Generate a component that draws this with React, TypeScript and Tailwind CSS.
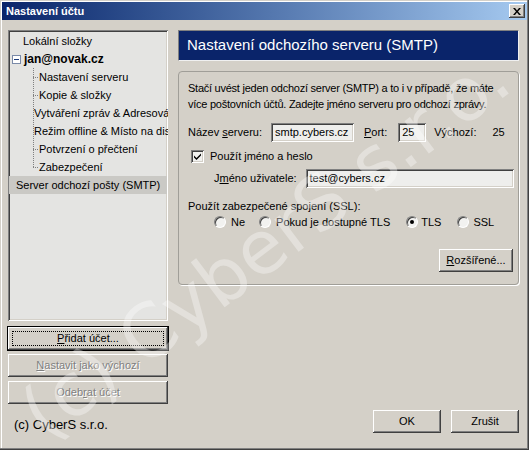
import type { ReactNode } from 'react';

const raised =
  'bg-[#d4d0c8] shadow-[inset_-1px_-1px_0_#404040,inset_1px_1px_0_#ffffff,inset_-2px_-2px_0_#808080,inset_2px_2px_0_#d4d0c8]';
const sunken =
  'shadow-[inset_1px_1px_0_#808080,inset_-1px_-1px_0_#ffffff,inset_2px_2px_0_#404040,inset_-2px_-2px_0_#d4d0c8]';

function Button({
  children,
  className = '',
  disabled = false,
  focused = false,
}: {
  children: ReactNode;
  className?: string;
  disabled?: boolean;
  focused?: boolean;
}) {
  return (
    <div
      className={`h-[23px] flex items-center justify-center ${raised} ${
        focused ? 'outline outline-1 outline-black' : ''
      } ${disabled ? 'text-[#808080] [text-shadow:1px_1px_0_#ffffff]' : 'text-black'} ${className}`}
    >
      {focused ? (
        <div className="absolute inset-[4px] border border-dotted border-black" />
      ) : null}
      <span className="relative">{children}</span>
    </div>
  );
}

function Radio({ checked = false }: { checked?: boolean }) {
  return (
    <span className="w-[12px] h-[12px] rounded-full bg-[#f2f2f0] border border-[#808080] border-b-white border-r-white shadow-[inset_1px_1px_0_#404040] flex items-center justify-center">
      {checked && <span className="w-[4px] h-[4px] rounded-full bg-black" />}
    </span>
  );
}

function Field({ value, className = '' }: { value: string; className?: string }) {
  return (
    <div className={`h-[19px] bg-[#eeeeec] ${sunken} flex items-center pl-[4px] ${className}`}>
      {value}
    </div>
  );
}

const children = [
  'Nastavení serveru',
  'Kopie & složky',
  'Vytváření zpráv & Adresování',
  'Režim offline & Místo na disku',
  'Potvrzení o přečtení',
  'Zabezpečení',
];

function AccountTree() {
  return (
    <div className={`h-[291px] bg-[#e4e4e2] ${sunken} p-[2px] pt-[2px] overflow-hidden`}>
      <div className="h-[18px] flex items-center pl-[13px] whitespace-nowrap">Lokální složky</div>
      <div className="h-[18px] flex items-center pl-[2px] whitespace-nowrap">
        <span className="w-[9px] h-[9px] border border-[#7a8aa8] bg-white flex items-center justify-center mr-[3px]">
          <span className="w-[5px] h-[1px] bg-[#1b3a7a]" />
        </span>
        <span className="font-bold text-[12px]">jan@novak.cz</span>
      </div>
      <div className="relative">
        {/* dotted connector running down the child list */}
        <div className="absolute left-[23px] top-0 h-[99px] border-l border-dotted border-[#808080]" />
        {children.map((c) => (
          <div key={c} className="h-[18px] flex items-center whitespace-nowrap">
            <span className="ml-[23px] w-[5px] border-t border-dotted border-[#808080]" />
            <span className="ml-[1px]">{c}</span>
          </div>
        ))}
      </div>
      <div className="h-[18px] -mx-[1px] flex items-center pl-[7px] bg-[#cac9c5] whitespace-nowrap">
        Server odchozí pošty (SMTP)
      </div>
    </div>
  );
}

export default function App() {
  return (
    <div className="relative w-[529px] h-[450px] overflow-hidden bg-[#d4d0c8] text-[11px] text-black font-['Liberation_Sans','Arial',sans-serif] shadow-[inset_-1px_-1px_0_#404040,inset_-2px_-2px_0_#808080,inset_1px_1px_0_#d4d0c8,inset_2px_2px_0_#ffffff] flex flex-col p-[2px]">
      {/* title bar */}
      <div className="h-[18px] shrink-0 bg-gradient-to-r from-[#0a246a] to-[#a6caf0] flex items-center pl-[4px] pr-[2px]">
        <span className="text-white font-bold text-[11px]">Nastavení účtu</span>
        <div className={`ml-auto w-[16px] h-[14px] ${raised} flex items-center justify-center`}>
          <svg width="8" height="7" viewBox="0 0 8 7">
            <path d="M0 0h2l2 2.5L6 0h2L5 3.5 8 7H6L4 4.5 2 7H0l3-3.5z" fill="#000" />
          </svg>
        </div>
      </div>

      <div className="flex-1 flex gap-[10px] pl-[6px] pr-[8px] pt-[10px] pb-[15px]">
        {/* accounts column */}
        <div className="w-[160px] flex flex-col">
          <AccountTree />
          <div className="mt-[6px] flex flex-col gap-[4px]">
            <Button focused className="relative">
              <span className="underline">P</span>řidat účet...
            </Button>
            <Button disabled>
              <span className="underline">N</span>astavit jako výchozí
            </Button>
            <Button disabled>
              Odeb<span className="underline">r</span>at účet
            </Button>
          </div>
          <div className="mt-auto pl-[6px] text-[13px] leading-[16px]">(c) CyberS s.r.o.</div>
        </div>

        {/* settings pane */}
        <div className="flex-1 flex flex-col">
          <div className="h-[31px] bg-[#0a246a] border border-[#808080] border-b-[#f0f0f0] border-r-[#f0f0f0] flex items-center pl-[8px] text-white text-[15px]">
            Nastavení odchozího serveru (SMTP)
          </div>

          <div className="mt-[10px] h-[214px] rounded-[4px] border border-[#a09e98] shadow-[1px_1px_0_#ffffff] px-[9px] pt-[8px]">
            <p className="leading-[16px] whitespace-nowrap tracking-[-0.25px]">
              Stačí uvést jeden odchozí server (SMTP) a to i v případě, že máte
              <br />
              více poštovních účtů. Zadejte jméno serveru pro odchozí zprávy.
            </p>

            <div className="mt-[11px] flex items-center">
              <span>
                Název <span className="underline">s</span>erveru:
              </span>
              <Field value="smtp.cybers.cz" className="ml-[9px] w-[83px]" />
              <span className="ml-[10px]">
                <span className="underline">P</span>ort:
              </span>
              <Field value="25" className="ml-[11px] w-[28px]" />
              <span className="ml-[8px]">Výchozí:</span>
              <span className="ml-[16px]">25</span>
            </div>

            <div className="mt-[6px] ml-[3px] flex items-center">
              <span className={`w-[13px] h-[13px] bg-[#f2f2f0] ${sunken} flex items-center justify-center`}>
                <svg width="7" height="7" viewBox="0 0 7 7">
                  <path d="M0 2.5l2.5 2.5L7 0.5v2L2.5 7 0 4.5z" fill="#000" />
                </svg>
              </span>
              <span className="ml-[6px]">Použít jméno a heslo</span>
            </div>

            <div className="mt-[4px] ml-[26px] flex items-center">
              <span>
                J<span className="underline">m</span>éno uživatele:
              </span>
              <Field value="test@cybers.cz" className="ml-[9px] flex-1 -mr-[5px]" />
            </div>

            <div className="mt-[10px]">Použít zabezpečené spojení (SSL):</div>

            <div className="mt-0 ml-[26px] flex items-center">
              <Radio />
              <span className="ml-[5px]">Ne</span>
              <span className="ml-[14px]" />
              <Radio />
              <span className="ml-[5px]">Pokud je dostupné TLS</span>
              <span className="ml-[16px]" />
              <Radio checked />
              <span className="ml-[3px]">TLS</span>
              <span className="ml-[16px]" />
              <Radio />
              <span className="ml-[4px]">SSL</span>
            </div>

            <div className="mt-[18px] flex justify-end -mr-[4px]">
              <Button className="w-[74px]">
                <span className="underline">R</span>ozšířené...
              </Button>
            </div>
          </div>

          <div className="mt-auto flex justify-end gap-[10px]">
            <Button className="w-[68px]">OK</Button>
            <Button className="w-[68px]">Zrušit</Button>
          </div>
        </div>
      </div>

      {/* diagonal watermark */}
      <div className="pointer-events-none absolute left-[265px] top-[245px] -translate-x-1/2 -translate-y-1/2 -rotate-[37deg] whitespace-nowrap text-[74px] text-white/35 font-['DejaVu_Sans',sans-serif]">
        (c) CyberS s.r.o.
      </div>
    </div>
  );
}
